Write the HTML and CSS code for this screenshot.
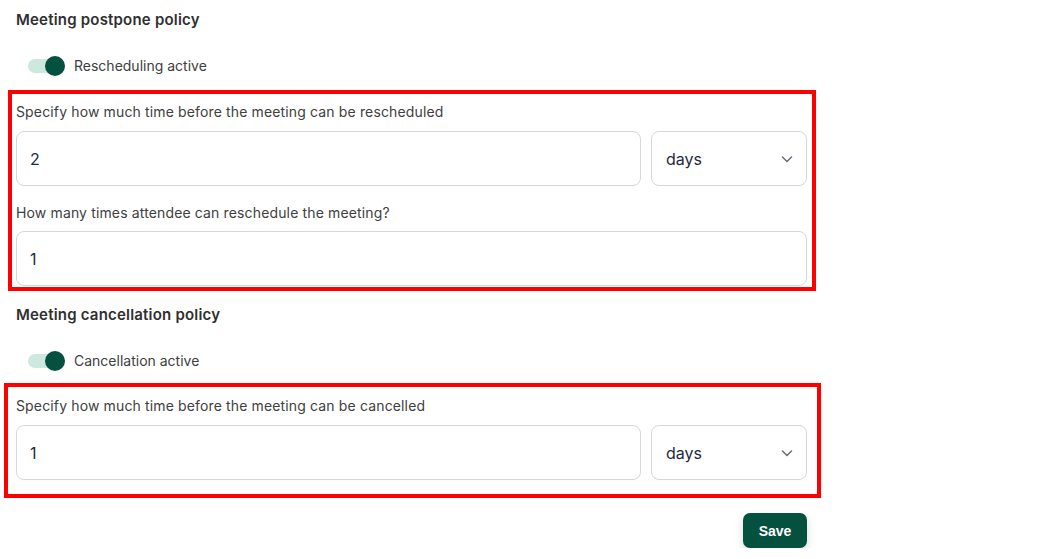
FILE: index.html
```html
<!DOCTYPE html>
<html lang="en">
<head>
<meta charset="utf-8">
<title>Meeting policies</title>
<link rel="stylesheet" href="styles.css">
</head>
<body>
<div class="page">
  <h2 class="section-title">Meeting postpone policy</h2>
  <div class="toggle-row">
    <span class="toggle"><span class="knob"></span></span>
    <span class="toggle-label">Rescheduling active</span>
  </div>
  <div class="highlight hl-one">
    <label class="field-label">Specify how much time before the meeting can be rescheduled</label>
    <div class="field-row">
      <div class="input grow">2</div>
      <div class="select"><span>days</span>
        <svg class="chev" width="14" height="14" viewBox="0 0 14 14"><path d="M2.5 5 L7 9.5 L11.5 5" fill="none" stroke="#6b7280" stroke-width="1.6" stroke-linecap="round" stroke-linejoin="round"/></svg>
      </div>
    </div>
    <label class="field-label second">How many times attendee can reschedule the meeting?</label>
    <div class="field-row">
      <div class="input grow">1</div>
    </div>
  </div>

  <h2 class="section-title two">Meeting cancellation policy</h2>
  <div class="toggle-row">
    <span class="toggle"><span class="knob"></span></span>
    <span class="toggle-label">Cancellation active</span>
  </div>
  <div class="highlight hl-two">
    <label class="field-label">Specify how much time before the meeting can be cancelled</label>
    <div class="field-row">
      <div class="input grow">1</div>
      <div class="select"><span>days</span>
        <svg class="chev" width="14" height="14" viewBox="0 0 14 14"><path d="M2.5 5 L7 9.5 L11.5 5" fill="none" stroke="#6b7280" stroke-width="1.6" stroke-linecap="round" stroke-linejoin="round"/></svg>
      </div>
    </div>
  </div>
  <div class="actions">
    <button class="save">Save</button>
  </div>
</div>
</body>
</html>
```

FILE: styles.css
```css
* { box-sizing: border-box; }
html, body { margin: 0; padding: 0; background: #ffffff; }
body { font-family: Inter, "Noto Sans", "Liberation Sans", sans-serif; color: #3b3b3b; }

.page {
  width: 807px;
  padding: 10px 0 0 16px;
}

.section-title {
  margin: 0;
  font-size: 15px;
  line-height: 20px;
  font-weight: 600;
  letter-spacing: 0.2px;
  color: #2f2f2f;
}
.section-title.two { margin-top: 14px; }

.toggle-row {
  display: flex;
  align-items: center;
  height: 20px;
  margin-top: 26px;
  padding-left: 12px;
}
.toggle {
  position: relative;
  width: 34px;
  height: 14px;
  border-radius: 7px;
  background: #cde8df;
  display: inline-block;
}
.knob {
  position: absolute;
  top: -3px;
  right: -3px;
  width: 20px;
  height: 20px;
  border-radius: 50%;
  background: #04513f;
}
.toggle-label {
  margin-left: 12px;
  font-size: 14px;
  line-height: 20px;
  color: #404040;
}

.highlight {
  border: 4px solid #ff0000;
}
.hl-one {
  margin: 14px -9px 0 -8px;
  padding: 8px 5px 1px 4px;
}
.hl-two {
  margin: 12px -14px 0 -12px;
  padding: 9px 10px 14px 8px;
}

.field-label {
  display: block;
  font-size: 14px;
  line-height: 20px;
  letter-spacing: 0.14px;
  color: #404040;
}
.field-label.second { margin-top: 17px; }

.field-row {
  display: flex;
  gap: 10px;
  margin-top: 9px;
}
.field-label.second + .field-row { margin-top: 8px; }

.input, .select {
  height: 55px;
  border: 1px solid #d4d7dc;
  border-radius: 8px;
  background: #fff;
  display: flex;
  align-items: center;
  padding: 0 13px;
  font-size: 16px;
  color: #1f2a3d;
}
.grow { flex: 1; }
.select {
  width: 156px;
  justify-content: space-between;
  padding: 0 12px 0 14px;
}
.chev { display: block; }

.actions {
  display: flex;
  justify-content: flex-end;
  margin-top: 15px;
}
.save {
  width: 64px;
  height: 35px;
  border: none;
  border-radius: 7px;
  background: #04513f;
  color: #ffffff;
  font-family: "Liberation Sans", Arial, sans-serif;
  font-weight: 700;
  font-size: 14px;
  box-shadow: 0 4px 10px rgba(4, 81, 63, 0.18);
}
```
